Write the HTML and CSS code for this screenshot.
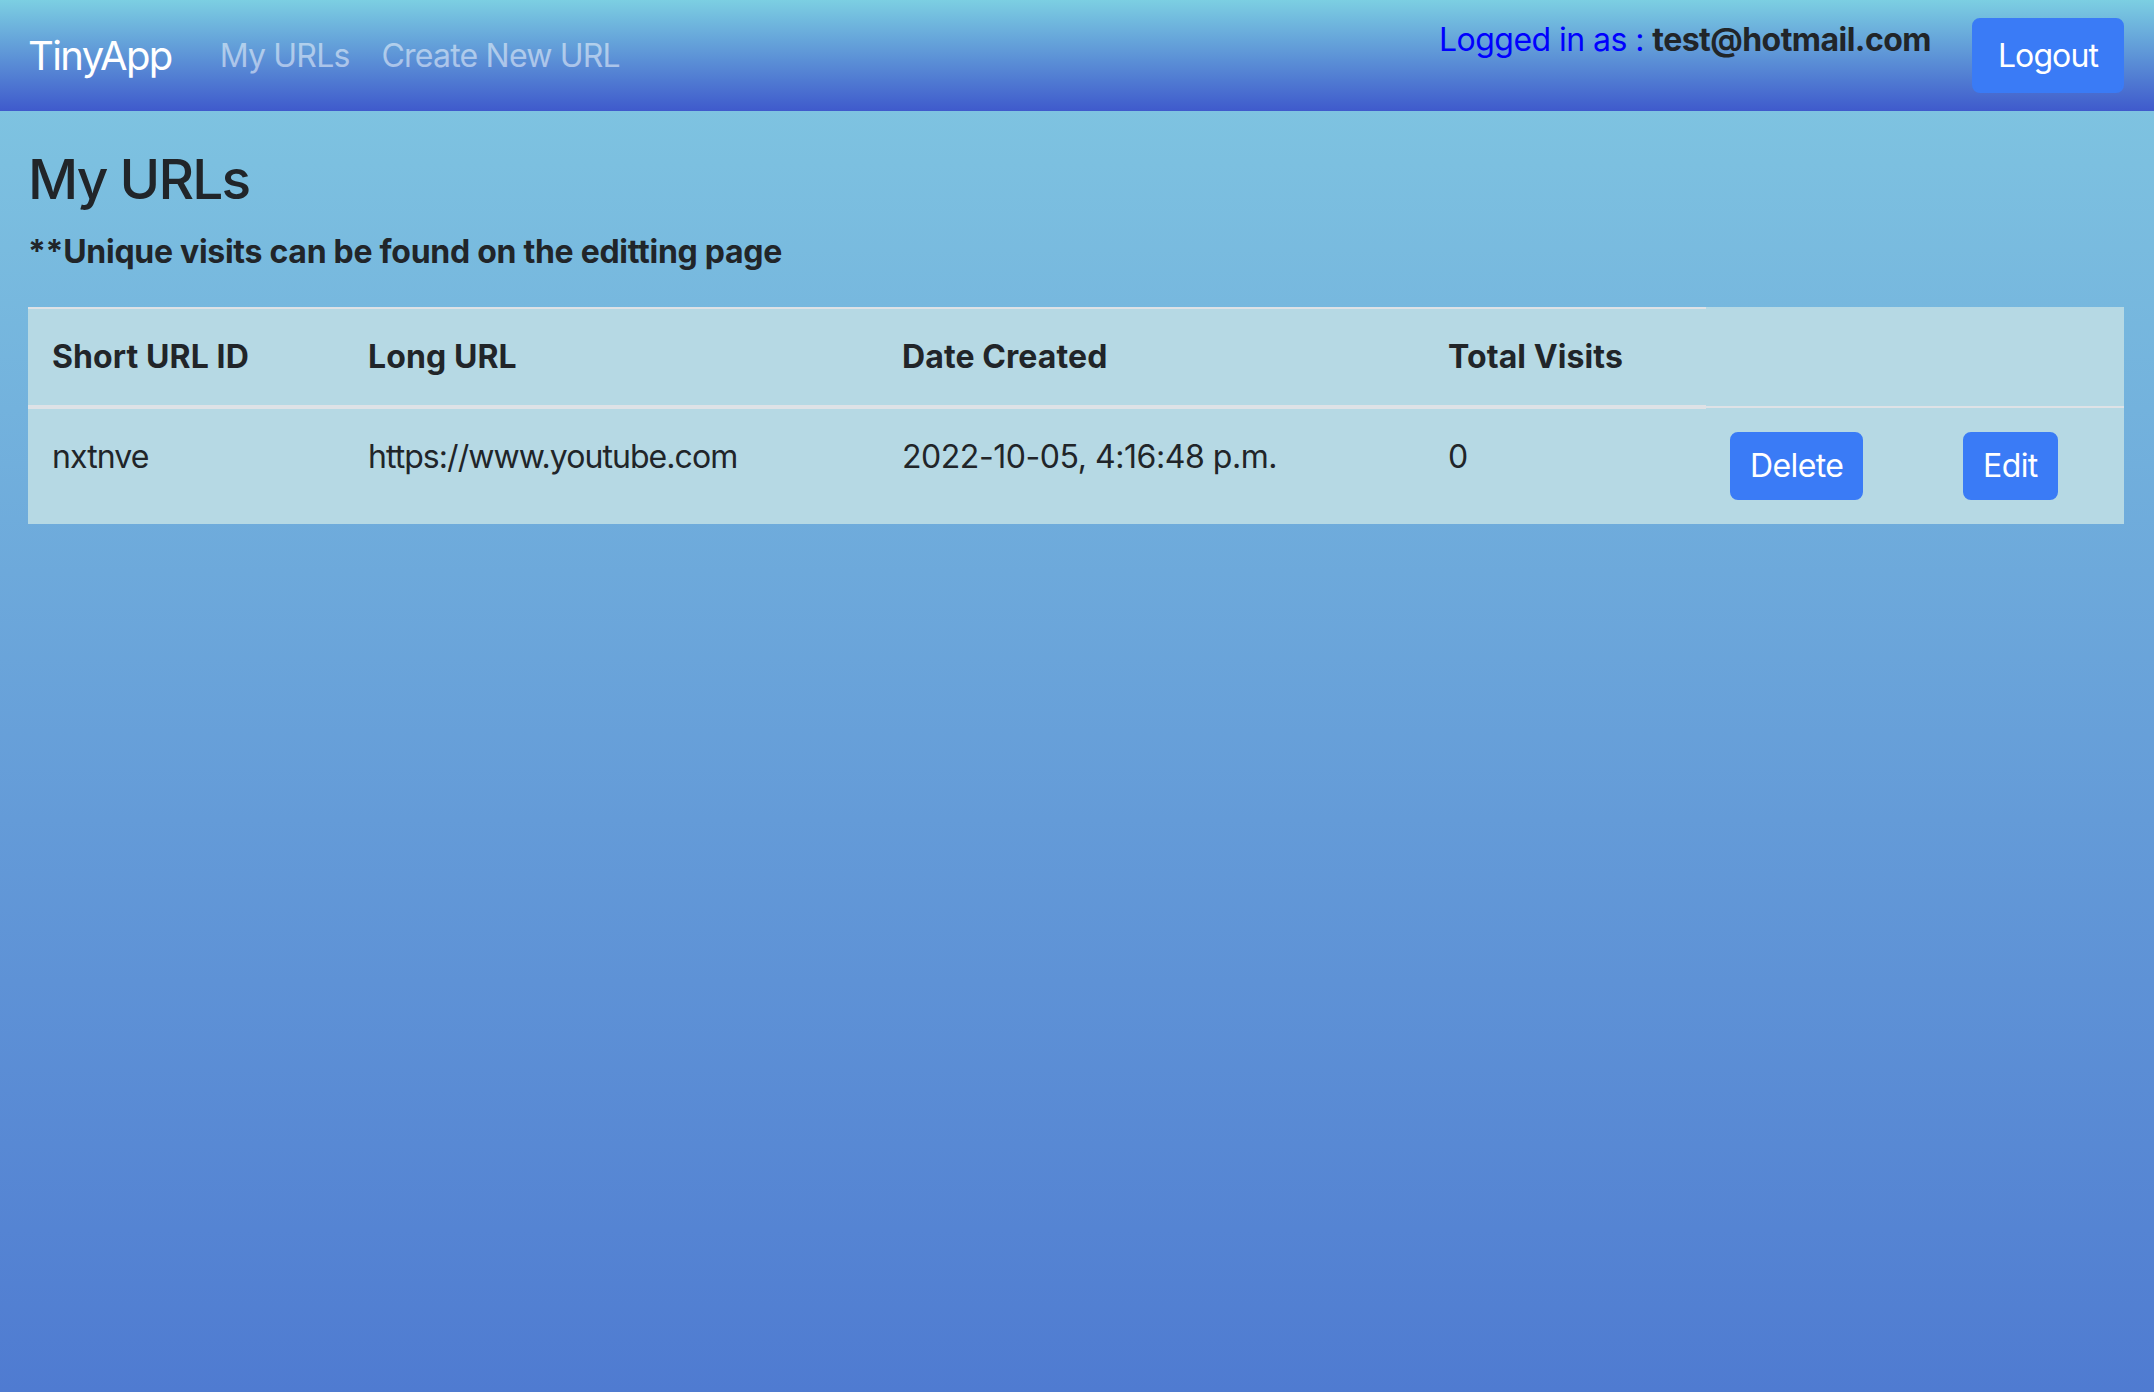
FILE: index.html
```html
<!DOCTYPE html>
<html lang="en">
<head>
<meta charset="utf-8">
<title>TinyApp</title>
<link rel="stylesheet" href="styles.css">
</head>
<body>
<nav class="navbar">
  <a class="brand" href="#">TinyApp</a>
  <ul class="nav-links">
    <li><a class="nav-link" href="#">My URLs</a></li>
    <li><a class="nav-link" href="#">Create New URL</a></li>
  </ul>
  <div class="user-area">
    <p class="logged">Logged in as : <b class="email">test@hotmail.com</b></p>
    <button class="btn btn-logout" type="button">Logout</button>
  </div>
</nav>
<main class="container">
  <h1 class="title">My URLs</h1>
  <h6 class="note">**Unique visits can be found on the editting page</h6>
  <table class="url-table">
    <colgroup>
      <col class="c1"><col class="c2"><col class="c3"><col class="c4"><col class="c5"><col class="c6">
    </colgroup>
    <thead>
      <tr>
        <th>Short URL ID</th>
        <th>Long URL</th>
        <th>Date Created</th>
        <th>Total Visits</th>
      </tr>
    </thead>
    <tbody>
      <tr>
        <td class="id-cell">nxtnve</td>
        <td class="url-cell">https://www.youtube.com</td>
        <td>2022-10-05, 4:16:48 p.m.</td>
        <td>0</td>
        <td><button class="btn btn-row" type="button">Delete</button></td>
        <td><button class="btn btn-row" type="button">Edit</button></td>
      </tr>
    </tbody>
  </table>
</main>
</body>
</html>
```
FILE: styles.css
```css
html {
  height: 100%;
}

body {
  margin: 0;
  min-height: 100%;
  font-family: "Inter", "Liberation Sans", sans-serif;
  font-size: 32px;
  line-height: 48px;
  color: #212529;
  background: linear-gradient(180deg, #82c9e2 0%, #4f7bd1 100%);
  background-attachment: fixed;
}

.navbar {
  box-sizing: border-box;
  height: 111px;
  display: flex;
  align-items: center;
  padding: 0 30px 0 28px;
  background: linear-gradient(180deg, #7ccfe2 0%, #3f5acc 100%);
}

.brand {
  font-size: 40px;
  line-height: 60px;
  color: #ffffff;
  text-decoration: none;
  margin-right: 32px;
  letter-spacing: -1.6px;
}

.nav-links {
  display: flex;
  list-style: none;
  margin: 0;
  padding: 0;
}

.nav-link {
  display: block;
  padding: 0 16px;
  color: rgba(255, 255, 255, 0.5);
  text-decoration: none;
  letter-spacing: -0.8px;
}

.user-area {
  margin-left: auto;
  display: flex;
  align-items: center;
}

.logged {
  margin: 0 41px 32px 0;
  color: #0000ff;
  letter-spacing: -0.55px;
}

.email {
  color: #212529;
  font-weight: 700;
}

.btn {
  font-family: inherit;
  font-size: 32px;
  color: #ffffff;
  background: #3a7bf6;
  border: 2px solid #3a7bf6;
  border-radius: 8px;
  cursor: pointer;
  letter-spacing: -0.6px;
}

.btn-logout {
  padding: 12px 24px;
  line-height: 47px;
  letter-spacing: -0.9px;
}

.container {
  padding: 0 30px 0 28px;
}

.title {
  margin: 35px 0 20px;
  font-size: 55px;
  line-height: 67px;
  font-weight: 500;
  letter-spacing: -1.8px;
}

.note {
  margin: 0 0 36px;
  font-size: 32px;
  line-height: 38px;
  font-weight: 700;
  letter-spacing: -0.28px;
}

.url-table {
  width: 100%;
  table-layout: fixed;
  border-collapse: collapse;
  background: #b6d9e4;
}

.c1 { width: 316px; }
.c2 { width: 534px; }
.c3 { width: 546px; }
.c4 { width: 282px; }
.c5 { width: 233px; }
.c6 { width: 185px; }

.url-table th,
.url-table td {
  padding: 24px;
  text-align: left;
  vertical-align: top;
  line-height: 48px;
}

.url-table th {
  font-weight: 700;
  letter-spacing: 0.1px;
  border-top: 2px solid #dee2e6;
  border-bottom: 4px solid #dee2e6;
}

.url-table td {
  border-top: 2px solid #dee2e6;
  letter-spacing: -0.45px;
}

.url-table .url-cell {
  letter-spacing: -0.95px;
}

.url-table .id-cell {
  letter-spacing: -0.9px;
}

.btn-row {
  display: inline-block;
  vertical-align: top;
  padding: 12px 18px;
  line-height: 40px;
}
```
